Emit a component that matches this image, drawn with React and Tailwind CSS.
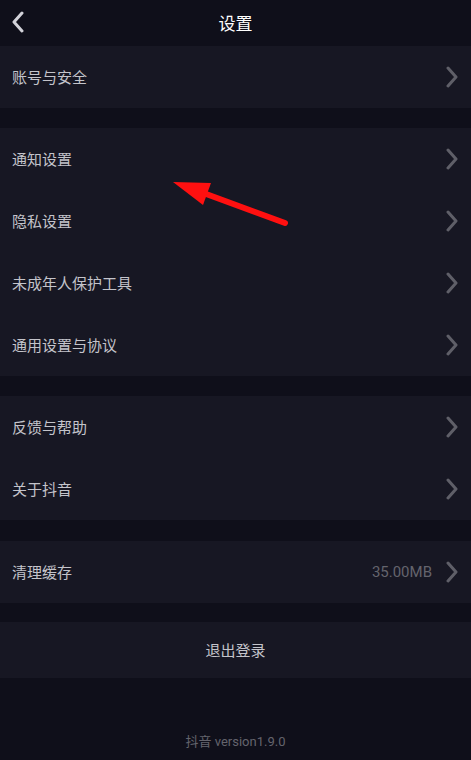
const Chevron = () => (
  <svg width="14" height="22" viewBox="0 0 14 22" fill="none" className="shrink-0">
    <path d="M3 2 L11 11 L3 20" stroke="#5f5f68" strokeWidth="3" strokeLinecap="round" strokeLinejoin="round" />
  </svg>
);

const Row = ({ label, extra }) => (
  <div className="h-[62px] flex items-center justify-between pl-3 pr-[12px]">
    <span className="text-[15px] text-[#c4c4cb]">{label}</span>
    <div className="flex items-center gap-[13px]">
      {extra && (
        <span className="text-[15px] text-[#64646d]" style={{ fontFamily: 'Roboto, "Noto Sans CJK SC", sans-serif' }}>
          {extra}
        </span>
      )}
      <Chevron />
    </div>
  </div>
);

const Section = ({ children }) => <div className="bg-[#171723]">{children}</div>;

export default function App() {
  return (
    <div
      className="relative w-[471px] h-[760px] bg-[#0f0f1a] flex flex-col overflow-hidden"
      style={{ fontFamily: '"Noto Sans CJK SC", Roboto, "Noto Sans", sans-serif' }}
    >
      {/* 顶部栏 */}
      <div className="h-[46px] relative flex items-center justify-center">
        <svg width="14" height="22" viewBox="0 0 14 22" fill="none" className="absolute left-[11px] top-[11px]">
          <path d="M11 2 L3 11 L11 20" stroke="#d2d2d9" strokeWidth="3" strokeLinecap="round" strokeLinejoin="round" />
        </svg>
        <span className="text-[17px] text-white">设置</span>
      </div>

      <Section>
        <Row label="账号与安全" />
      </Section>

      <div className="h-[20px]" />
      <Section>
        <Row label="通知设置" />
        <Row label="隐私设置" />
        <Row label="未成年人保护工具" />
        <Row label="通用设置与协议" />
      </Section>

      <div className="h-[20px]" />
      <Section>
        <Row label="反馈与帮助" />
        <Row label="关于抖音" />
      </Section>

      <div className="h-[21px]" />
      <Section>
        <Row label="清理缓存" extra="35.00MB" />
      </Section>

      <div className="h-[19px]" />
      <div className="h-[56px] bg-[#171723] flex items-center justify-center">
        <span className="text-[15px] text-[#c4c4cb]">退出登录</span>
      </div>

      <div className="flex-1 flex items-end justify-center pb-[9px]">
        <span className="text-[13px] text-[#64646d]" style={{ fontFamily: 'Roboto, "Noto Sans CJK SC", sans-serif' }}>
          抖音 version1.9.0
        </span>
      </div>

      {/* 红色箭头标注 */}
      <svg width="471" height="760" className="absolute left-0 top-0 pointer-events-none">
        <line x1="285" y1="223" x2="198" y2="191" stroke="#ff1010" strokeWidth="6" strokeLinecap="round" />
        <polygon points="173,182 211,183 203,205" fill="#ff1010" />
      </svg>
    </div>
  );
}
